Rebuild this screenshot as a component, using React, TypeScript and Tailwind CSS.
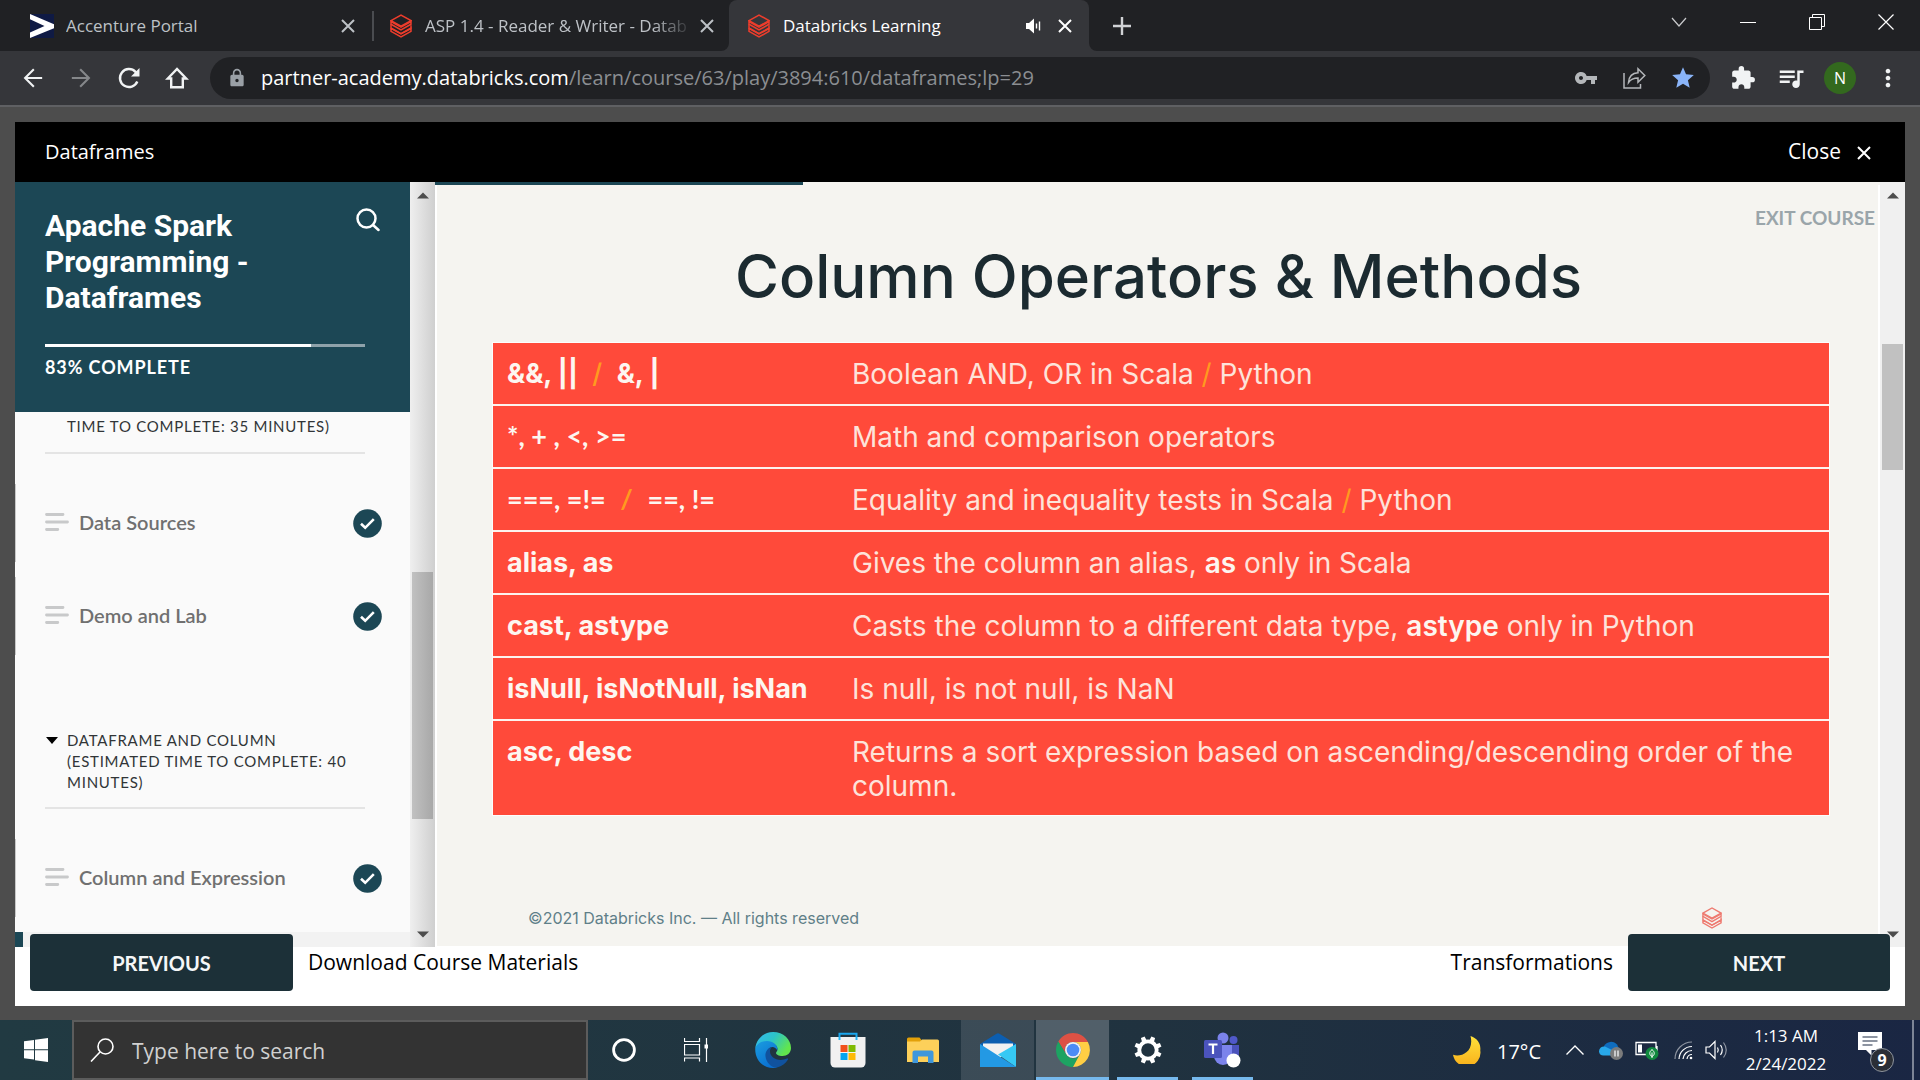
import type { ReactNode } from "react";
import { MdExtension, MdLock, MdMoreVert, MdQueueMusic, MdStar, MdVpnKey } from "react-icons/md";

const UI = "font-['Open_Sans','Noto_Sans',sans-serif]";

/* ---------- icons ---------- */

function BricksIcon({ color = "#ee3d2c", className }: { color?: string; className?: string }) {
  return (
    <svg viewBox="0 0 22 24" className={className} fill="none" stroke={color} strokeWidth="1.5" strokeLinejoin="miter" aria-hidden="true">
      <path d="M1 6.6 11 1l10 5.6L11 12.2z" />
      <path d="M1 6.6v3.6l10 5.8 10-5.8v-2.6l-10 5.6-10-5.6" />
      <path d="M1 10.2v3.8l10 5.7 10-5.7v-2.8" />
      <path d="M1 14v3.3L11 23l10-5.7v-2.8L11 20 1 14.4" />
    </svg>
  );
}

function AccentureIcon() {
  return (
    <svg viewBox="0 0 24 24" className="size-6 shrink-0" aria-hidden="true">
      <rect width="24" height="24" fill="#0f1a44" />
      <path d="M0 0v5.2L14.5 12 0 18.6V24l24-9.8V10.2z" fill="#fff" />
    </svg>
  );
}

function Cross({ className, width = 2 }: { className?: string; width?: number }) {
  return (
    <svg viewBox="0 0 16 16" className={className} stroke="currentColor" strokeWidth={width} aria-hidden="true">
      <path d="M2 2l12 12M14 2 2 14" />
    </svg>
  );
}

function SpeakerIcon() {
  return (
    <svg viewBox="0 0 16 16" className="size-4" aria-hidden="true">
      <path d="M1 5h3l5-4.500v15L4 11H1z" fill="#fff" />
      <path d="M11.500 5.500v5M14.500 3.500v9" stroke="#fff" strokeWidth="1.400" />
    </svg>
  );
}

function ArrowIcon({ flip, className }: { flip?: boolean; className?: string }) {
  return (
    <svg viewBox="0 0 24 24" className={className} fill="none" stroke="currentColor" strokeWidth="2.500" aria-hidden="true">
      <path d={flip ? "M1 12h20M11 1.500l10.500 10.500L11 22.500" : "M23 12H3M13 1.500 2.500 12 13 22.500"} />
    </svg>
  );
}

function ReloadIcon() {
  return (
    <svg viewBox="0 0 24 24" className="size-6" fill="none" stroke="currentColor" strokeWidth="2.400" aria-hidden="true">
      <path d="M20.300 15.500A9 9 0 1 1 18.500 5.800L21 8.400" />
      <path d="M22.500 2v8.500H14z" fill="currentColor" stroke="none" />
    </svg>
  );
}

function HomeIcon() {
  return (
    <svg viewBox="0 0 24 24" className="size-6" fill="none" stroke="currentColor" strokeWidth="2.400" aria-hidden="true">
      <path d="M2.800 12.500h3.400v8.800h11.600v-8.800h3.400L12 3z" />
    </svg>
  );
}

function ShareIcon() {
  return (
    <svg viewBox="0 0 24 24" className="size-6" fill="none" stroke="#b4b7ba" strokeWidth="1.500" aria-hidden="true">
      <path d="M2 7v15h16.500v-4" />
      <path d="M6.500 16.500C7 10.500 10 7 16 6.800V2.800l6.800 6.700-6.800 6.700v-4.100c-4.500 0-7.300 1.200-9.500 4.400z" />
    </svg>
  );
}

function SearchGlyph() {
  return (
    <svg viewBox="0 0 24 24" className="size-6" fill="none" stroke="#fff" strokeWidth="2.500" strokeLinecap="round" aria-hidden="true">
      <circle cx="10.500" cy="10.500" r="9" />
      <path d="M17 17l5.500 5" />
    </svg>
  );
}

function CheckBadge() {
  return (
    <svg viewBox="0 0 29 29" className="size-[29px] shrink-0" aria-label="Completed">
      <circle cx="14.500" cy="14.500" r="14.300" fill="#1c4755" />
      <path d="M8 14.800l4.200 4 8.600-8.600" fill="none" stroke="#fff" strokeWidth="2.600" />
    </svg>
  );
}

function LinesIcon() {
  return (
    <svg viewBox="0 0 24 20" className="h-5 w-6 shrink-0" stroke="#c8c9ca" strokeWidth="2.800" strokeLinecap="round" aria-hidden="true">
      <path d="M1.500 2.500H18M1.500 10h21M1.500 17.500h11.300" />
    </svg>
  );
}

function Triangle({ up }: { up?: boolean }) {
  return (
    <svg viewBox="0 0 12 7" className="h-[7px] w-3" fill="#4d4d4d" aria-hidden="true">
      <path d={up ? "M0 6.500 6 .500l6 6z" : "M0 .500h12l-6 6z"} />
    </svg>
  );
}

/* ---------- browser chrome ---------- */

function Corner({ flip }: { flip?: boolean }) {
  return (
    <svg viewBox="0 0 8 8" className={flip ? "absolute -right-2 bottom-0 size-2 scale-x-[-1]" : "absolute -left-2 bottom-0 size-2"} aria-hidden="true">
      <path d="M8 0v8H0a8 8 0 0 0 8-8z" fill="#35363a" />
    </svg>
  );
}

function TabStrip() {
  return (
    <div className="flex h-[51px] items-center bg-[#202124] text-[17px] text-[#bdc1c6]">
      <div className="flex w-[372px] items-center pr-3.5 pl-[30px]">
        <AccentureIcon />
        <span className="ml-3 flex-1 truncate">Accenture Portal</span>
        <button aria-label="Close Accenture Portal" className="p-0.5"><Cross className="size-4" /></button>
      </div>
      <div className="h-[30px] w-0.5 bg-[#4a4c50]" />
      <div className="flex w-[355px] items-center pr-3 pl-4">
        <BricksIcon className="h-6 w-[22px] shrink-0" />
        <span className="ml-[13px] flex-1 whitespace-nowrap [mask-image:linear-gradient(to_right,black_85%,transparent)]">
          ASP 1.4 - Reader &amp; Writer - Datab
        </span>
        <button aria-label="Close ASP 1.4" className="ml-1 p-0.5"><Cross className="size-4" /></button>
      </div>
      <div className="relative flex h-full w-[360px] items-center rounded-t-lg bg-[#35363a] pr-[14px] pl-[19px] text-white">
        <Corner />
        <Corner flip />
        <BricksIcon className="h-6 w-[22px] shrink-0" />
        <span className="ml-[13px] flex-1 truncate">Databricks Learning</span>
        <button aria-label="Mute tab"><SpeakerIcon /></button>
        <button aria-label="Close Databricks Learning" className="ml-3.5 p-0.5"><Cross className="size-4" /></button>
      </div>
      <button aria-label="New tab" className="ml-6 text-[#d0d2d5]">
        <svg viewBox="0 0 18 18" className="size-[18px]" stroke="currentColor" strokeWidth="2.400"><path d="M9 0v18M0 9h18" /></svg>
      </button>
      <div className="mb-2 ml-auto flex items-center text-white">
        <button aria-label="Search tabs" className="flex w-[68px] justify-center">
          <svg viewBox="0 0 16 16" className="size-4" fill="none" stroke="#c9cacc" strokeWidth="1.200"><path d="M1 4l7 8 7-8" /></svg>
        </button>
        <button aria-label="Minimize" className="flex w-[69px] justify-center">
          <svg viewBox="0 0 16 16" className="size-4" stroke="currentColor"><path d="M0 8.500h16" /></svg>
        </button>
        <button aria-label="Restore" className="flex w-[69px] justify-center">
          <svg viewBox="0 0 16 16" className="size-4" fill="none" stroke="currentColor"><path d="M.500 3.500h12v12H.500zM3.500 3.500v-3h12v12h-3" /></svg>
        </button>
        <button aria-label="Close window" className="flex w-[69px] justify-center">
          <svg viewBox="0 0 16 16" className="size-4" stroke="currentColor" strokeWidth="1.200"><path d="M.500.500l15 15M15.500.500l-15 15" /></svg>
        </button>
      </div>
    </div>
  );
}

function Toolbar() {
  return (
    <div className="flex h-14 items-center border-b-2 border-[#5f6063] bg-[#35363a] pr-[18px] text-[#f1f3f4]">
      <div className="flex w-[210px] items-center gap-7 pl-[23px]">
        <button aria-label="Back"><ArrowIcon className="size-5" /></button>
        <button aria-label="Forward" className="text-[#85878a]"><ArrowIcon flip className="size-5" /></button>
        <button aria-label="Reload" className="-ml-0.5"><ReloadIcon /></button>
        <button aria-label="Home" className="-ml-1"><HomeIcon /></button>
      </div>
      <div className="flex h-[42px] flex-1 items-center rounded-full bg-[#202124] pr-3.5 pl-[17px] text-[20px]">
        <MdLock className="size-5 text-[#9aa0a6]" aria-hidden="true" />
        <p className="ml-3.5 flex-1 truncate text-[#8b8e92]">
          <span className="text-white">partner-academy.databricks.com</span>/learn/course/63/play/3894:610/dataframes;lp=29
        </p>
        <div className="flex items-center gap-6">
          <button aria-label="Passwords"><MdVpnKey className="size-6 text-[#b4b7ba]" /></button>
          <button aria-label="Share"><ShareIcon /></button>
          <button aria-label="Bookmark"><MdStar className="size-[26px] text-[#8ab4f8]" /></button>
        </div>
      </div>
      <div className="ml-5 flex items-center gap-5">
        <button aria-label="Extensions"><MdExtension className="size-[26px]" /></button>
        <button aria-label="Media controls"><MdQueueMusic className="size-[30px]" /></button>
        <button aria-label="Profile" className="-ml-0.5 flex size-8 items-center justify-center rounded-full bg-[#33691e] text-[16px] text-white">N</button>
        <button aria-label="Menu" className="-ml-0.5"><MdMoreVert className="size-7" /></button>
      </div>
    </div>
  );
}

/* ---------- course player ---------- */

function Lesson({ title }: { title: string }) {
  return (
    <a href="#" className="mb-[15px] flex h-[78px] items-center border-l border-[#c8c8c8] pr-7 pl-[29px]">
      <span className="flex flex-1 items-center pb-0.5">
        <LinesIcon />
        <span className="ml-2.5 text-[20px] font-semibold text-[#707070]">{title}</span>
      </span>
      <CheckBadge />
    </a>
  );
}

function Sidebar() {
  return (
    <aside className="flex w-[395px] shrink-0 flex-col bg-[#fafafa] font-['Lato',sans-serif]">
      <div className="h-[230px] shrink-0 bg-[#1c4755] pt-[26px] pr-[30px] pl-[30px] text-white">
        <div className="flex items-start justify-between">
          <h2 className="w-[240px] font-['Roboto',sans-serif] text-[30px] leading-[36px] font-bold">Apache Spark Programming - Dataframes</h2>
          <button aria-label="Search course"><SearchGlyph /></button>
        </div>
        <div className="mt-7 mr-[15px] h-[3px] bg-[#8fa2aa]">
          <div className="h-full w-[83%] bg-white" />
        </div>
        <p className="mt-2 text-[18px] leading-6 font-bold tracking-wider">83% COMPLETE</p>
      </div>
      <nav className="min-h-0 flex-1 overflow-hidden">
        <div className="mr-[45px] mb-[30px] ml-[30px] border-b-2 border-[#e4e4e4] pt-1 pb-[15px] pl-[22px]">
          <h3 className="text-[15px] leading-[21px] tracking-wider text-[#313537]">TIME TO COMPLETE: 35 MINUTES)</h3>
        </div>
        <Lesson title="Data Sources" />
        <Lesson title="Demo and Lab" />
        <div className="mt-[75px] mr-[45px] mb-[30px] ml-[30px] border-b-2 border-[#e4e4e4] pb-[14px]">
          <button className="flex items-start text-left">
            <svg viewBox="0 0 12 7" className="mt-[7px] mr-[9px] ml-px h-[7px] w-3 shrink-0" aria-hidden="true"><path d="M0 0h12L6 7z" fill="#000" /></svg>
            <span className="text-[15px] leading-[21px] tracking-wider text-[#313537]">
              DATAFRAME AND COLUMN (ESTIMATED TIME TO COMPLETE: 40 MINUTES)
            </span>
          </button>
        </div>
        <Lesson title="Column and Expression" />
      </nav>
      <div className="h-[15px] shrink-0 bg-[#f2f2f2]"><div className="h-full w-2 bg-[#1c4755]" /></div>
    </aside>
  );
}

const CELL_SLASH = "text-[#ff9a1f]";
const OPERATORS = "font-['Lato',sans-serif] leading-[24px] font-bold";
const ROWS: { name: ReactNode; text: ReactNode }[] = [
  {
    name: <>&amp;&amp;, || <span className={`mx-2 font-medium ${CELL_SLASH}`}>/</span> &amp;, |</>,
    text: <>Boolean AND, OR in Scala <span className={CELL_SLASH}>/</span> Python</>,
  },
  { name: <span className={OPERATORS}>*, + , &lt;, &gt;=</span>, text: "Math and comparison operators" },
  {
    name: <span className={OPERATORS}>===, =!= <span className={`mx-2 ${CELL_SLASH}`}>/</span> ==, !=</span>,
    text: <>Equality and inequality tests in Scala <span className={CELL_SLASH}>/</span> Python</>,
  },
  { name: "alias, as", text: <>Gives the column an alias, <b className="font-semibold text-[#fdf6f0]">as</b> only in Scala</> },
  { name: "cast, astype", text: <>Casts the column to a different data type, <b className="font-semibold text-[#fdf6f0]">astype</b> only in Python</> },
  { name: "isNull, isNotNull, isNan", text: "Is null, is not null, is NaN" },
  { name: "asc, desc", text: "Returns a sort expression based on ascending/descending order of the column." },
];

function Slide() {
  return (
    <section className="flex min-w-0 flex-1 flex-col bg-white">
      <div className="h-[3px] bg-[#f5f4f0]"><div className="h-full w-[368px] bg-[#1c4755]" /></div>
      <div className="mx-0.5 mb-px flex min-h-0 flex-1 flex-col bg-[#f5f4f0] font-['Inter',sans-serif]">
        <a href="#" className="mt-[19px] mr-[3px] self-end font-['Lato',sans-serif] text-[19px] leading-[28px] font-bold text-[#9aa5aa]">EXIT COURSE</a>
        <h1 className="mt-2 ml-0.5 text-center text-[60px] leading-[72px] font-medium text-[#1b2a30]">Column Operators &amp; Methods</h1>
        <div className="mt-[31px] mr-[49px] ml-14">
          <table className="w-full border-collapse bg-[#ff4a3a] text-[28px] leading-[34px] outline-1 outline-white/80">
            <tbody>
              {ROWS.map((row, i) => (
                <tr key={i} className="border-b-2 border-[#fdf3ee] align-top last:border-b-0 last:[&>*]:pb-3">
                  <th scope="row" className="w-[359px] pt-3.5 pb-[13px] pl-3.5 text-left text-[27px] font-bold whitespace-nowrap text-[#fdf6f0]">{row.name}</th>
                  <td className="pt-3.5 pr-6 pb-[13px] text-[#fde3da]">{row.text}</td>
                </tr>
              ))}
            </tbody>
          </table>
        </div>
        <footer className="mt-auto flex items-center justify-between pr-[156px] pb-4 pl-[91px] text-[16px] leading-6 text-[#5f7f88]">
          <span>©2021 Databricks Inc. — All rights reserved</span>
          <BricksIcon color="#ee7a70" className="h-[22px] w-5" />
        </footer>
      </div>
    </section>
  );
}

function Player() {
  return (
    <main className="flex min-h-0 flex-1 flex-col bg-[#4d4d4d] px-[15px] pt-[15px] pb-[14px]">
      <div className="flex h-[60px] shrink-0 items-center justify-between bg-black pr-[33px] pl-[30px] text-[20px] text-white">
        <h2>Dataframes</h2>
        <button className="flex items-center gap-[15px] text-[21px]">Close <Cross className="mt-0.5 size-4" /></button>
      </div>
      <div className="flex min-h-0 flex-1 bg-white">
        <Sidebar />
        <div className="flex w-[25px] shrink-0 flex-col items-center bg-linear-to-r from-[#efefef] to-[#cfcfcf]">
          <div className="flex h-[26px] items-center"><Triangle up /></div>
          <div className="flex-[364]" />
          <div className="w-[21px] flex-[247] bg-linear-to-r from-[#c1c1c1] to-[#a8a8a8]" />
          <div className="flex-[102]" />
          <div className="flex h-[26px] items-center"><Triangle /></div>
        </div>
        <Slide />
        <div className="flex w-[25px] shrink-0 flex-col items-center bg-[#f0f0f0]">
          <div className="flex h-[26px] items-center"><Triangle up /></div>
          <div className="flex-[136]" />
          <div className="w-[21px] flex-[126] bg-[#c1c1c1]" />
          <div className="flex-[451]" />
          <div className="flex h-[26px] items-center"><Triangle /></div>
        </div>
      </div>
      <div className="shrink-0 bg-white">
        <div className="relative -mt-[13px] flex items-center px-[15px] pb-[15px] text-[21px] text-black">
          <button className="h-[57px] w-[263px] rounded-[4px] bg-[#1c3038] font-['Lato',sans-serif] text-[20px] font-bold text-[#f5f7f8]">PREVIOUS</button>
          <a href="#" className="ml-[15px]">Download Course Materials</a>
          <span className="mr-[15px] ml-auto">Transformations</span>
          <button className="h-[57px] w-[262px] rounded-[4px] bg-[#1c3038] font-['Lato',sans-serif] text-[20px] font-bold text-[#f5f7f8]">NEXT</button>
        </div>
      </div>
    </main>
  );
}

/* ---------- taskbar ---------- */

function EdgeIcon() {
  return (
    <svg viewBox="0 0 36 36" className="size-9" aria-hidden="true">
      <defs>
        <linearGradient id="edgeTop" x1="0" y1="0" x2="1" y2="0.5"><stop offset="0" stopColor="#35b8f0" /><stop offset=".5" stopColor="#2cc3c8" /><stop offset="1" stopColor="#62e64c" /></linearGradient>
        <linearGradient id="edgeLeft" x1="0" y1="0" x2="0.6" y2="1"><stop offset="0" stopColor="#1a9de0" /><stop offset="1" stopColor="#0a6fd0" /></linearGradient>
      </defs>
      <path d="M.300 16C1.500 6.500 9 0 18 0c10.500 0 18 7.500 18 16 0 5-4 8-8.500 8-4 0-6.500-1.500-6.500-3 0-1 1.500-1.500 1.500-4 0-3-3-6-8-6C8 11 3 13 .300 16z" fill="url(#edgeTop)" />
      <path d="M.300 16C2 11.500 7 9 12 9c6 0 10.500 4 10.500 8 0 .500 0 1-.200 1.500-1-2-2.800-3.500-5-3.500-3 0-5.500 3-5.500 7 0 6 4.500 11.500 10.200 13.500-1.300.300-2.600.500-4 .500C7 36-.500 27 .300 16z" fill="url(#edgeLeft)" />
      <path d="M17 15c-4.500 1-7 5-6.500 9.500C11.200 31 17 36 22 35.500c5-1.200 8.700-4.200 11-8 .500-1-.300-1.300-1-.900-2 .900-4 1.400-6.500 1.400C20 28 15 24 15 19.500c0-2 .700-3.500 2-4.500z" fill="#10529e" />
    </svg>
  );
}

function StoreIcon() {
  return (
    <svg viewBox="0 0 36 36" className="size-9" aria-hidden="true">
      <path d="M9.500 8V1.800h17V8" fill="none" stroke="#1aa7ee" strokeWidth="2" />
      <path d="M.500 5h35v26a4.500 4.500 0 0 1-4.500 4.500H5A4.500 4.500 0 0 1 .500 31z" fill="#f1f1f1" />
      <path d="M9.500 8V5M26.500 8V5" stroke="#25b5f5" strokeWidth="2" />
      <path d="M10.500 13h7v7h-7z" fill="#f1511b" /><path d="M18.500 13h7v7h-7z" fill="#80bb03" />
      <path d="M10.500 21h7v7h-7z" fill="#04a4ee" /><path d="M18.500 21h7v7h-7z" fill="#fdba08" />
    </svg>
  );
}

function FolderIcon() {
  return (
    <svg viewBox="0 0 32 28" className="h-7 w-8" aria-hidden="true">
      <path d="M0 3a1.500 1.500 0 0 1 1.500-1.500h11L14.500 4v4H0z" fill="#e2a009" />
      <path d="M0 5.500h13l2-2h15.500A1.500 1.500 0 0 1 32 5v21H0z" fill="#fdd05a" />
      <path d="M5.500 27V16.500a2 2 0 0 1 2-2h17a2 2 0 0 1 2 2V27H21v-6.500H11V27z" fill="#3f97dc" />
    </svg>
  );
}

function MailIcon() {
  return (
    <svg viewBox="0 0 36 34" className="h-[34px] w-9" aria-hidden="true">
      <path d="M0 11 16.500.800a3 3 0 0 1 3 0L36 11v5H0z" fill="#0c5eb0" />
      <path d="M3 10.500h30V16L18 26 3 16z" fill="#f1f1f1" />
      <path d="M36 11v23L18 21.500z" fill="#36c9f4" />
      <path d="M0 11 36 34H0z" fill="#2399e4" />
    </svg>
  );
}

function ChromeIcon() {
  return (
    <svg viewBox="0 0 34 34" className="size-[34px]" aria-hidden="true">
      <path d="M2.300 8.500A17 17 0 0 1 31.700 8.500L31.700 9H17a8 8 0 0 0-7 12z" fill="#dd5144" />
      <path d="M2.300 8.500A17 17 0 0 0 17 34l7-12.500a8 8 0 0 1-14-.500z" fill="#1da362" />
      <path d="M31.900 9A17 17 0 0 1 17 34l7-13a8 8 0 0 0-7-12z" fill="#ffce44" />
      <circle cx="17" cy="17" r="8" fill="#f1f1f1" />
      <circle cx="17" cy="17" r="6.300" fill="#4c8bf5" />
    </svg>
  );
}

function GearIcon() {
  return (
    <svg viewBox="0 0 28 28" className="size-7" aria-hidden="true">
      <circle cx="14" cy="14" r="8.700" fill="none" stroke="#fff" strokeWidth="3.800" />
      {[22.5, 67.5, 112.5, 157.5, 202.5, 247.5, 292.5, 337.5].map((a) => (
        <path key={a} d="M11.600 4.500 12 .300h4l.400 4.200z" fill="#fff" transform={`rotate(${a} 14 14)`} />
      ))}
    </svg>
  );
}

function TeamsIcon() {
  return (
    <svg viewBox="0 0 38 36" className="h-9 w-[38px]" aria-hidden="true">
      <circle cx="29.500" cy="8" r="4" fill="#5059c9" />
      <path d="M24 13h11v9a7 7 0 0 1-7 7z" fill="#4b53bc" />
      <circle cx="19" cy="6" r="5.500" fill="#7b83eb" />
      <path d="M10 13h18v11a9 9 0 0 1-18 0z" fill="#7b83eb" />
      <rect y="8" width="18" height="18" rx="1.500" fill="#4b53bc" />
      <path d="M4.500 12.500h9M9 12.500V22" stroke="#fff" strokeWidth="2.200" />
      <circle cx="29.500" cy="28.500" r="7" fill="#fff" />
    </svg>
  );
}

function TaskButton({ label, width = "w-[75px]", className = "", line = "", children }: { label: string; width?: string; className?: string; line?: string; children: ReactNode }) {
  return (
    <button aria-label={label} className={`relative flex h-full shrink-0 items-center justify-center ${width} ${className}`}>
      {children}
      {line && <span className={`absolute bottom-0 h-[3px] bg-[#76b9ed] ${line}`} />}
    </button>
  );
}

function Taskbar() {
  return (
    <footer className="flex h-[60px] shrink-0 items-center bg-linear-to-r from-[#213a42] via-[#20323f] via-60% to-[#1a2643] text-white">
      <button aria-label="Start" className="flex h-full w-[72px] shrink-0 items-center justify-center">
        <svg viewBox="0 0 24 24" className="size-6" fill="#fff"><path d="M0 3.300 10 2v9.300H0zM11 1.800 24 0v11.300H11zM0 12.300h10v9.300L0 20.300zM11 12.300h13V24l-13-1.800z" /></svg>
      </button>
      <label className="flex h-full w-[516px] items-center border-2 border-[#5c5c5c] bg-[#333] pl-4">
        <svg viewBox="0 0 24 24" className="size-6 shrink-0" fill="none" stroke="#fff" strokeWidth="1.600" aria-hidden="true"><circle cx="15.500" cy="8.500" r="7.500" /><path d="M10 14 1 23.500" /></svg>
        <input aria-label="Search" placeholder="Type here to search" className="ml-[18px] min-w-0 flex-1 bg-transparent pt-1 text-[21px] outline-none placeholder:text-[#d0d0d0]" />
      </label>
      <TaskButton label="Cortana" width="w-[72px]">
        <svg viewBox="0 0 24 24" className="size-6" fill="none" stroke="#fff" strokeWidth="2.800"><circle cx="12" cy="12" r="10.400" /></svg>
      </TaskButton>
      <TaskButton label="Task View">
        <svg viewBox="0 0 24 24" className="mr-1 size-6" fill="none" stroke="#fff" strokeWidth="1.200"><path d="M.500 0v3.500h15V0M.500 6.500h15v10.500H.500zM.500 23.500V20h15v3.500M22.500 0v24" /><path d="M20.500 6.500h3.500v4h-3.500z" fill="#fff" stroke="none" /></svg>
      </TaskButton>
      <TaskButton label="Edge"><EdgeIcon /></TaskButton>
      <TaskButton label="Store"><StoreIcon /></TaskButton>
      <TaskButton label="File Explorer"><FolderIcon /></TaskButton>
      <TaskButton label="Mail" className="border-x border-[#213440] bg-white/12"><MailIcon /></TaskButton>
      <TaskButton label="Chrome" className="border-x border-[#213440] bg-white/22" line="inset-x-0"><ChromeIcon /></TaskButton>
      <TaskButton label="Settings" line="inset-x-[7px]"><GearIcon /></TaskButton>
      <TaskButton label="Teams" line="inset-x-[7px]"><TeamsIcon /></TaskButton>

      <div className="ml-auto flex h-full items-center">
        <svg viewBox="0 0 28 28" className="size-7" aria-hidden="true">
          <defs><linearGradient id="moon" x1="0" y1="0" x2="0" y2="1"><stop offset="0" stopColor="#ffe23a" /><stop offset="1" stopColor="#f9b01c" /></linearGradient></defs>
          <path d="M17.500 0C25 2.500 28 8.500 27.300 14.500A13.800 13.800 0 0 1 0 18.800C8 21.500 21.500 16 17.500 0z" fill="url(#moon)" />
        </svg>
        <span className="mt-1 ml-4 text-[20px]">17°C</span>
        <button aria-label="Hidden icons" className="ml-[25px]">
          <svg viewBox="0 0 18 10" className="h-2.5 w-[18px]" fill="none" stroke="#fff" strokeWidth="1.400"><path d="M.500 9.500 9 1l8.500 8.500" /></svg>
        </button>
        <svg viewBox="0 0 24 20" className="ml-[15px] h-5 w-6" aria-hidden="true">
          <path d="M5 6A8 8 0 0 1 18 4.500l3 6L6 15z" fill="#0f6cbd" />
          <path d="M0 11.500a5 5 0 0 1 6-5l8 4 7 4-3 1H4.500A4.500 4.500 0 0 1 0 11.500z" fill="#28a8ea" />
          <circle cx="17.500" cy="13.500" r="6.500" fill="#7b7b7b" /><path d="M16 10.500v6M19 10.500v6" stroke="#fff" strokeWidth="1.200" />
        </svg>
        <svg viewBox="0 0 24 20" className="ml-3 h-5 w-6" aria-hidden="true">
          <path d="M1 2.500h20v12H1zM22 6v5" fill="none" stroke="#fff" strokeWidth="1.300" /><path d="M3 4.500h4v8H3z" fill="#fff" />
          <circle cx="17" cy="13.500" r="6.500" fill="#10893e" /><path d="M17 9.500c3 2.500 3 5.500 0 7-3-1.500-3-4.500 0-7zM17 12.500v5.500" fill="none" stroke="#fff" />
        </svg>
        <svg viewBox="0 0 19 19" className="ml-[15px] size-[19px]" fill="none" stroke="#fff" strokeWidth="1.200" aria-hidden="true">
          <path d="M1 18A17 17 0 0 1 18 1" opacity=".5" /><path d="M5 18A13 13 0 0 1 18 5.500M9 18a9 9 0 0 1 9-8.500M13 18a5 5 0 0 1 5-4.500" /><circle cx="17" cy="17" r="1.300" fill="#fff" stroke="none" />
        </svg>
        <svg viewBox="0 0 23 20" className="ml-3 h-5 w-[23px]" fill="none" stroke="#fff" strokeWidth="1.200" aria-hidden="true">
          <path d="M1 7h3.500L10 1.500v17L4.500 13H1z" /><path d="M12.500 7.500q1.500 2.500 0 5M15.500 5q3.500 5 0 10" /><path d="M18.500 2.500q5.500 7.500 0 15" opacity=".5" />
        </svg>
        <div className="ml-2 w-[100px] text-center text-[17px] leading-7">
          <div>1:13 AM</div>
          <div>2/24/2022</div>
        </div>
        <button aria-label="Notifications" className="relative mr-[18px] ml-[22px] h-9 w-9">
          <svg viewBox="0 0 36 36" className="size-9"><path d="M0 0h24v18H13.500v5.500L8 18H0z" fill="#fff" /><path d="M4.500 5h15M4.500 9h15M4.500 13h10" stroke="#1c2b45" strokeWidth="1.200" /></svg>
          <span className="absolute right-0 -bottom-1 flex size-6 items-center justify-center rounded-full border border-[#8f959e] bg-[#2b2f36] text-[16px] font-bold">9</span>
        </button>
        <div className="mr-1.5 h-full w-0.5 bg-[#7d8596]" />
      </div>
    </footer>
  );
}

export default function App() {
  return (
    <div className={`flex h-screen flex-col overflow-hidden ${UI}`}>
      <TabStrip />
      <Toolbar />
      <Player />
      <Taskbar />
    </div>
  );
}
